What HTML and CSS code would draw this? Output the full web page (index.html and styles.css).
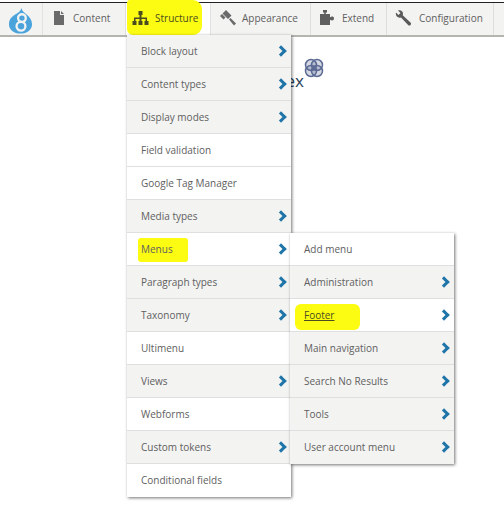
FILE: index.html
```html
<!DOCTYPE html>
<html lang="en">
<head>
    <meta charset="UTF-8">
    <meta name="viewport" content="width=device-width, initial-scale=1.0">
    <title>Structure menu</title>
    <link rel="stylesheet" href="styles.css">
</head>
<body>
    <nav class="toolbar">
        <a class="tab tab-logo">
            <svg width="25" height="27" viewBox="0 0 26 28">
                <path fill="#4ba3dc" d="M14 1c.5 3 2.500 4.500 5 6.500 3.500 2.800 6 6 6 10.300C25 23.500 20 27.500 13 27.500S1 23.500 1 17.800c0-4.800 3-7.800 6.500-10C10.500 6 13 4.500 14 1z"/>
                <circle cx="14.500" cy="11.500" r="4" fill="#4ba3dc" stroke="#f3f3f2" stroke-width="2.400"/>
                <circle cx="13.500" cy="20" r="4.600" fill="#4ba3dc" stroke="#f3f3f2" stroke-width="2.400"/>
            </svg>
        </a>
        <a class="tab tab-content">
            <svg width="12" height="14" viewBox="0 0 12 14"><path fill="#6a6a6a" d="M1 0h6v4h4v10H1zM8 0l3 3H8z"/></svg>
            Content
        </a>
        <a class="tab tab-structure">
            <span class="marker marker-tab"></span>
            <svg width="17" height="14" viewBox="0 0 16 14"><path fill="#4b4b20" d="M6 0h4v4H9v2.500h5.500V10H16v4h-4v-4h1V8H9v2h1v4H6v-4h1V8H3v2h1v4H0v-4h1.500V6.500H7V4H6z"/></svg>
            Structure
        </a>
        <a class="tab tab-appearance">
            <svg width="16" height="16" viewBox="0 0 16 16"><path fill="#6a6a6a" d="M6 0l5.500 5.500-3.500 3.500L2.500 3.500zM9 9.500l1.500-1.500L16 13.500 14 15.500z"/><path fill="#6a6a6a" d="M0 6l2-2 3.500 3.500-2 2z"/></svg>
            Appearance
        </a>
        <a class="tab tab-extend">
            <svg width="16" height="16" viewBox="0 0 16 16"><path fill="#5f5f5f" d="M4 0h4v2.500H6.800V4H11v3.300c1.800-1.300 4-.8 4 1.200s-2.200 2.500-4 1.200V15H1V4h4.200V2.500H4z"/></svg>
            Extend
        </a>
        <a class="tab tab-config">
            <svg width="16" height="16" viewBox="0 0 16 16"><path fill="#5a5a5a" d="M1 2.500L3.500 5 5.500 3 3 .5C5.500-.5 8 1 8 3.800c0 .6-.1 1-.3 1.500L15.500 12.500c.8.800.6 1.700 0 2.400-.7.700-1.700.8-2.400 0L6 7.400C3 8.500 0 6 1 2.500z"/></svg>
            Configuration
        </a>
    </nav>

    <main class="page">
        <h1 class="page-title">Index</h1>
        <svg class="knot" width="20" height="20" viewBox="0 0 20 20" fill="rgba(86, 101, 143, 0.25)" stroke="#5b6a94" stroke-width="1.500">
            <circle cx="7" cy="7" r="5.500"/>
            <circle cx="13" cy="7" r="5.500"/>
            <circle cx="7" cy="13" r="5.500"/>
            <circle cx="13" cy="13" r="5.500"/>
        </svg>
    </main>

    <ul class="menu menu-main">
        <li class="item shade"><a>Block layout</a><i class="arrow"></i></li>
        <li class="item shade"><a>Content types</a><i class="arrow"></i></li>
        <li class="item shade"><a>Display modes</a><i class="arrow"></i></li>
        <li class="item"><a>Field validation</a></li>
        <li class="item"><a>Google Tag Manager</a></li>
        <li class="item shade"><a>Media types</a><i class="arrow"></i></li>
        <li class="item"><span class="marker marker-menus"></span><a>Menus</a><i class="arrow"></i></li>
        <li class="item shade"><a>Paragraph types</a><i class="arrow"></i></li>
        <li class="item shade"><a>Taxonomy</a><i class="arrow"></i></li>
        <li class="item"><a>Ultimenu</a></li>
        <li class="item shade"><a>Views</a><i class="arrow"></i></li>
        <li class="item"><a>Webforms</a></li>
        <li class="item shade"><a>Custom tokens</a><i class="arrow"></i></li>
        <li class="item"><a>Conditional fields</a></li>
    </ul>

    <ul class="menu menu-sub">
        <li class="item"><a>Add menu</a></li>
        <li class="item shade"><a>Administration</a><i class="arrow"></i></li>
        <li class="item"><span class="marker marker-footer"></span><a class="current">Footer</a><i class="arrow"></i></li>
        <li class="item shade"><a>Main navigation</a><i class="arrow"></i></li>
        <li class="item shade"><a>Search No Results</a><i class="arrow"></i></li>
        <li class="item shade"><a>Tools</a><i class="arrow"></i></li>
        <li class="item shade"><a>User account menu</a><i class="arrow"></i></li>
    </ul>
</body>
</html>
```

FILE: styles.css
```css
body {
    margin: 0;
    background-color: #ffffff;
    font-family: "Open Sans", Arial, sans-serif;
    font-size: 10px;
    color: #606060;
}

/* Toolbar */
.toolbar {
    display: flex;
    height: 32px;
    margin-top: 2px;
    border-top: 1px solid #222222;
    border-bottom: 2px solid #b4b4b0;
    background-color: #f3f3f2;
}

.tab {
    position: relative;
    display: flex;
    align-items: center;
    padding-bottom: 2px;
    border-right: 1px solid #dedede;
    isolation: isolate;
}

.tab-logo {
    width: 34px;
    padding: 3px 0 0 8px;
    border-right-color: #e2e2e2;
}

.tab-content {
    width: 72px;
    padding-left: 10px;
    gap: 8px;
}

.tab-structure {
    width: 78px;
    padding-left: 6px;
    gap: 6px;
    background-color: #ffffff;
    border-right-color: #e2e2e2;
    color: #4c4c20;
}

.tab-appearance {
    width: 90px;
    padding-left: 9px;
    gap: 6px;
}

.tab-extend {
    width: 67px;
    padding-left: 8px;
    gap: 7px;
}

.tab-config {
    width: 98px;
    padding-left: 8px;
    gap: 8px;
}

/* Marker strokes */
.marker {
    position: absolute;
    z-index: -1;
    background-color: #fcfc12;
}

.marker-tab {
    left: 1px;
    top: -3px;
    width: 75px;
    height: 35px;
    border-radius: 3px 9px 9px 6px;
}

.marker-menus {
    left: 11px;
    top: 5px;
    width: 50px;
    height: 24px;
    border-radius: 3px;
}

.marker-footer {
    left: 5px;
    top: 5px;
    width: 65px;
    height: 26px;
    border-radius: 6px;
}

/* Page behind the menus */
.page {
    display: flex;
    align-items: flex-start;
    padding: 21px 0 0 260px;
}

.page-title {
    margin: 11px 0 0;
    font-size: 17px;
    font-weight: 400;
    line-height: 24px;
    color: #2a3d57;
}

/* Dropdown menus */
.menu {
    position: absolute;
    width: 164px;
    margin: 0;
    padding: 0;
    list-style: none;
    background-color: #ffffff;
    box-shadow: 1px 1px 3px rgba(0, 0, 0, 0.55);
}

.menu-main {
    left: 127px;
    top: 35px;
    z-index: 2;
}

.menu-sub {
    left: 290px;
    top: 233px;
    z-index: 3;
}

.item {
    position: relative;
    display: flex;
    align-items: center;
    justify-content: space-between;
    box-sizing: border-box;
    height: 33px;
    padding: 0 4px 1px 14px;
    border-bottom: 1px solid #dfdfdf;
    isolation: isolate;
}

.item:last-child {
    border-bottom: none;
}

.shade {
    background-color: #f3f3f2;
}

.current {
    color: #4c4c20;
    text-decoration: underline;
}

.arrow {
    width: 5px;
    height: 5px;
    margin-right: 2px;
    border-top: 3px solid #1f75a8;
    border-right: 3px solid #1f75a8;
    transform: rotate(45deg);
}
```
